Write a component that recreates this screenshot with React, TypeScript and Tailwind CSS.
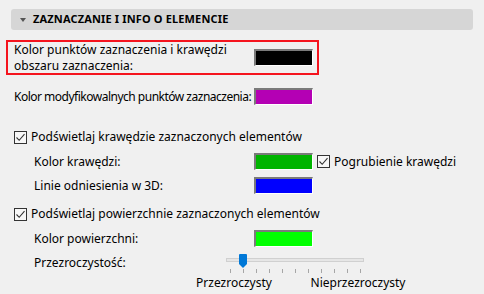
import React from "react";

const font = { fontFamily: '"Noto Sans", "Liberation Sans", sans-serif' };

function Swatch({ color }: { color: string }) {
  return (
    <div className="w-[59px] h-[17px] border-t-2 border-l-2 border-b border-r border-t-[#7a7a7a] border-l-[#7a7a7a] border-b-white border-r-white shrink-0">
      <div className={`w-full h-full ${color}`} />
    </div>
  );
}

function Check() {
  return (
    <div className="w-[13px] h-[13px] border border-[#333] bg-[#f7f7f7] flex items-center justify-center shrink-0">
      <svg width="11" height="11" viewBox="0 0 11 11" fill="none">
        <path d="M1.5 5.5 L4.2 8.3 L9.5 2.2" stroke="#333" strokeWidth="1.1" />
      </svg>
    </div>
  );
}

const ticks = [0, 1, 2, 3, 4, 5, 6, 7, 8, 9, 10];

export default function App() {
  return (
    <div className="w-[484px] h-[294px] bg-[#f0f0f0] overflow-hidden text-[12px] text-black whitespace-nowrap" style={font}>
      <div className="mx-[11px] mt-[9px] h-[21px] rounded-[3px] bg-[#d6d6d6] flex items-center pl-[9px] gap-[7px]">
        <svg width="6" height="4" viewBox="0 0 6 4"><path d="M0 0 H6 L3 4 Z" fill="#555" /></svg>
        <span className="font-bold text-[11px] tracking-[0.15px]">ZAZNACZANIE I INFO O ELEMENCIE</span>
      </div>

      <div className="ml-[6px] mt-[10px] w-[313px] h-[35px] border-2 border-[#f5141e] flex items-center pl-[6px]">
        <div className="w-[240px] shrink-0">
          <div className="leading-[16px]">Kolor punktów zaznaczenia i krawędzi</div>
          <div className="leading-[16px]">obszaru zaznaczenia:</div>
        </div>
        <Swatch color="bg-black" />
      </div>

      <div className="mt-[10px] h-[23px] flex items-center pl-[14px] gap-[3px]">
        <span className="tracking-[-0.5px]">Kolor modyfikowalnych punktów zaznaczenia:</span>
        <Swatch color="bg-[#b400b4]" />
      </div>

      <div className="mt-[18px] h-[22px] flex items-center pl-[14px] gap-[4px]">
        <Check />
        <span>Podświetlaj krawędzie zaznaczonych elementów</span>
      </div>

      <div className="mt-[2px] h-[23px] flex items-center pl-[34px]">
        <span className="w-[220px] shrink-0">Kolor krawędzi:</span>
        <Swatch color="bg-[#00b400]" />
        <div className="ml-[4px] flex items-center gap-[4px]">
          <Check />
          <span>Pogrubienie krawędzi</span>
        </div>
      </div>

      <div className="mt-[1px] h-[23px] flex items-center pl-[34px]">
        <span className="w-[220px] shrink-0">Linie odniesienia w 3D:</span>
        <Swatch color="bg-[#0000ff]" />
      </div>

      <div className="mt-[6px] h-[22px] flex items-center pl-[14px] gap-[4px]">
        <Check />
        <span>Podświetlaj powierzchnie zaznaczonych elementów</span>
      </div>

      <div className="mt-[2px] h-[23px] flex items-center pl-[34px]">
        <span className="w-[220px] shrink-0">Kolor powierzchni:</span>
        <Swatch color="bg-[#00ff00]" />
      </div>

      <div className="mt-[2px] h-[22px] flex items-center pl-[34px]">
        <span className="w-[192px] shrink-0">Przezroczystość:</span>
        <div className="relative w-[138px] h-[22px]">
          <div className="absolute left-0 right-0 top-[6px] h-[4px] bg-[#e6e6e6] border border-[#d0d0d0]" />
          <svg className="absolute left-[13px] top-[2px]" width="8" height="14" viewBox="0 0 8 14">
            <path d="M0 1 Q0 0 1 0 H7 Q8 0 8 1 V10 L4 14 L0 10 Z" fill="#0078d7" />
          </svg>
          <div className="absolute left-[4px] right-[3px] top-[17px] flex justify-between">
            {ticks.map((t) => (
              <div key={t} className="w-px h-[4px] bg-[#a6a6a6]" />
            ))}
          </div>
        </div>
      </div>

      <div className="relative h-[18px]">
        <span className="absolute left-[234px] -translate-x-1/2 top-0">Przezroczysty</span>
        <span className="absolute left-[358px] -translate-x-1/2 top-0">Nieprzezroczysty</span>
      </div>
    </div>
  );
}
